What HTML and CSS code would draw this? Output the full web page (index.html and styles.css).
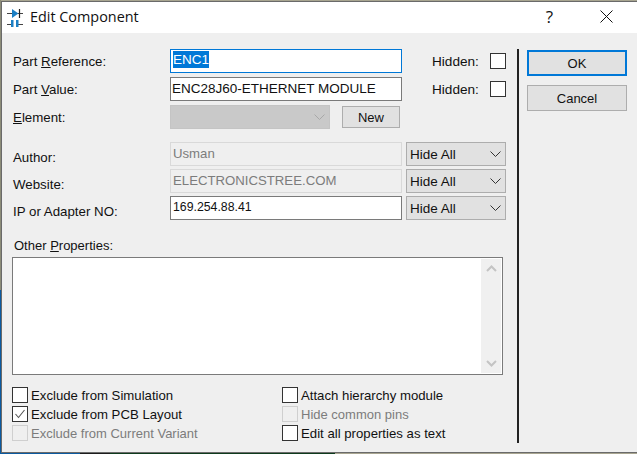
FILE: index.html
```html
<!DOCTYPE html>
<html lang="en">
  <head>
    <meta charset="UTF-8" />
    <title>Edit Component</title>
    <link rel="stylesheet" href="styles.css">
  </head>
  <body>
    <div class="dialog">
      <div class="titlebar">
        <svg class="app_icon" width="16" height="20" viewBox="0 0 16 20">
          <path d="M0 5.5H16M0 16.5H5M11 16.5H16" stroke="#444" fill="none" />
          <path d="M5 1L11.5 5.5L5 10Z" fill="#1c7fc4" />
          <path d="M12.5 1V10" stroke="#222" stroke-width="1.2" />
          <path d="M4 12H6.5V19H4ZM9 12H11.5V19H9Z" fill="#1c7fc4" />
        </svg>
        <span class="title_text">Edit Component</span>
        <span class="help_btn">?</span>
        <svg class="close_btn" width="13" height="13" viewBox="0 0 13 13">
          <path d="M.5 .5L12.5 12.5M12.5 .5L.5 12.5" stroke="#111" fill="none" />
        </svg>
      </div>
      <div class="content">
        <div class="main">
          <div class="row row_top">
            <label class="label"><span>Part <u>R</u>eference:</span></label>
            <div class="field"><span class="selected">ENC1</span></div>
            <span class="hidden_label">Hidden:</span>
            <span class="check hidden_check"></span>
          </div>
          <div class="row row_top">
            <label class="label"><span>Part <u>V</u>alue:</span></label>
            <div class="field field_dark field_value">ENC28J60-ETHERNET MODULE</div>
            <span class="hidden_label">Hidden:</span>
            <span class="check hidden_check"></span>
          </div>
          <div class="row row_top">
            <label class="label"><span><u>E</u>lement:</span></label>
            <div class="element_select">
              <svg width="11" height="6" viewBox="0 0 11 6"><path d="M.5 .5L5.5 5.5L10.5 .5" stroke="#a8a8a8" fill="none" /></svg>
            </div>
            <button class="new_btn">New</button>
          </div>

          <div class="meta">
            <div class="row">
              <label class="label label_low"><span>Author:</span></label>
              <div class="field field_off">Usman</div>
              <div class="hide_select">Hide All
                <svg width="11" height="6" viewBox="0 0 11 6"><path d="M.5 .5L5.5 5.5L10.5 .5" stroke="#333" fill="none" /></svg>
              </div>
            </div>
            <div class="row">
              <label class="label label_low"><span>Website:</span></label>
              <div class="field field_off">ELECTRONICSTREE.COM</div>
              <div class="hide_select">Hide All
                <svg width="11" height="6" viewBox="0 0 11 6"><path d="M.5 .5L5.5 5.5L10.5 .5" stroke="#333" fill="none" /></svg>
              </div>
            </div>
            <div class="row">
              <label class="label label_low"><span>IP or Adapter NO:</span></label>
              <div class="field field_dark field_ip">169.254.88.41</div>
              <div class="hide_select">Hide All
                <svg width="11" height="6" viewBox="0 0 11 6"><path d="M.5 .5L5.5 5.5L10.5 .5" stroke="#333" fill="none" /></svg>
              </div>
            </div>
          </div>

          <div class="other_label">Other <u>P</u>roperties:</div>
          <div class="other_box">
            <div class="scrollbar">
              <svg width="11" height="7" viewBox="0 0 11 7"><path d="M1 6L5.5 1.5L10 6" stroke="#c4c4c4" stroke-width="2" fill="none" /></svg>
              <svg width="11" height="7" viewBox="0 0 11 7"><path d="M1 1L5.5 5.5L10 1" stroke="#c4c4c4" stroke-width="2" fill="none" /></svg>
            </div>
          </div>

          <div class="options">
            <div class="option"><span class="check"></span>Exclude from Simulation</div>
            <div class="option"><span class="check"></span>Attach hierarchy module</div>
            <div class="option">
              <span class="check">
                <svg width="14" height="14" viewBox="0 0 14 14"><path d="M2.5 7L5.5 10.5L11.5 3" stroke="#555" stroke-width="1.1" fill="none" /></svg>
              </span>Exclude from PCB Layout
            </div>
            <div class="option option_off"><span class="check"></span>Hide common pins</div>
            <div class="option option_off"><span class="check"></span>Exclude from Current Variant</div>
            <div class="option"><span class="check"></span>Edit all properties as text</div>
          </div>
        </div>
        <div class="separator"></div>
        <div class="side">
          <button class="side_btn side_btn_ok">OK</button>
          <button class="side_btn">Cancel</button>
        </div>
      </div>
    </div>
  </body>
</html>
```

FILE: styles.css
```css
html,
body {
  margin: 0;
  padding: 0;
}
body {
  width: 637px;
  height: 454px;
  overflow: hidden;
  box-sizing: border-box;
  padding: 1px 0 1px 1px;
  /* bits of the app window behind the dialog */
  background:
    linear-gradient(90deg, #0b5aa0 0 80px, #1c1c1c 80px 110px, #0d3a1c 110px 335px, #a8a590 335px) left bottom / 100% 1px no-repeat,
    linear-gradient(#8c8c78 0 290px, #0b5aa0 290px) left top / 1px 100% no-repeat,
    #a8a590;
  font-family: "Liberation Sans", Arial, sans-serif;
  font-size: 13px;
  color: #111;
}
.dialog {
  height: 452px;
  box-sizing: border-box;
  display: flex;
  flex-direction: column;
  background-color: #efefef;
  border: 1px solid #6a6a6a;
  border-right: 0;
}
.titlebar {
  height: 31px;
  flex: none;
  display: flex;
  align-items: center;
  background-color: #fff;
  padding-left: 5px;
}
.app_icon {
  flex: none;
}
.title_text {
  margin-left: 7px;
  margin-bottom: 2px;
  font-family: "Open Sans", sans-serif;
  font-size: 14.4px;
}
.help_btn {
  margin-left: auto;
  margin-bottom: 2px;
  font-family: "Open Sans", sans-serif;
  font-size: 17px;
}
.close_btn {
  margin: 0 24px 2px 47px;
}
.content {
  flex: 1;
  display: flex;
  padding-top: 16px;
}
.main {
  width: 491px;
  margin-left: 10px;
  flex: none;
}
.row {
  display: flex;
  height: 24px;
}
.row_top {
  margin-bottom: 4px;
}
.label {
  width: 158px;
  flex: none;
  padding-left: 1px;
  padding-top: 5px;
  box-sizing: border-box;
  font-size: 13.3px;
}
.label_low {
  padding-top: 8px;
}
.field {
  width: 232px;
  height: 24px;
  flex: none;
  box-sizing: border-box;
  border: 1px solid #0078d7;
  background-color: #fff;
  padding: 0 2px;
  line-height: 21px;
  font-size: 13.5px;
}
.field_dark {
  border-color: #7a7a7a;
}
.field_value {
  padding-left: 1px;
}
.field_ip {
  font-size: 12.3px;
}
.field_off {
  border: 1px solid #d9d9d9;
  background-color: #efefef;
  color: #7c7c7c;
  font-size: 13.2px;
}
.selected {
  display: inline-block;
  height: 17px;
  line-height: 17px;
  margin-top: 1px;
  vertical-align: top;
  background-color: #0078d7;
  color: #fff;
}
.hidden_label {
  width: 47px;
  flex: none;
  margin-left: 30px;
  padding-top: 5px;
  font-size: 13.6px;
}
.hidden_check {
  margin: 4px 0 0 11px;
}
.check {
  width: 16px;
  height: 16px;
  flex: none;
  box-sizing: border-box;
  border: 1px solid #333;
  background-color: #fff;
  display: flex;
  align-items: center;
  justify-content: center;
}
.element_select {
  width: 160px;
  height: 24px;
  flex: none;
  box-sizing: border-box;
  background-color: #c9c9c9;
  border: 1px solid #c4c4c4;
  display: flex;
  align-items: center;
  justify-content: flex-end;
  padding-right: 4px;
}
.new_btn {
  width: 58px;
  height: 22px;
  flex: none;
  margin: 1px 0 0 12px;
  padding: 0;
  box-sizing: border-box;
  border: 1px solid #adadad;
  background-color: #e1e1e1;
  font: inherit;
  color: inherit;
}
.meta {
  margin-top: 13px;
  display: flex;
  flex-direction: column;
  gap: 3px;
}
.hide_select {
  width: 100px;
  height: 24px;
  flex: none;
  margin-left: 4px;
  box-sizing: border-box;
  border: 1px solid #adadad;
  background-color: #e1e1e1;
  display: flex;
  align-items: center;
  justify-content: space-between;
  padding: 0 4px 0 3px;
  font-size: 13.5px;
}
.other_label {
  margin: 18px 0 3px 2px;
  height: 16px;
  line-height: 16px;
}
.other_box {
  height: 118px;
  box-sizing: border-box;
  border: 1px solid #7a7a7a;
  background-color: #fff;
  display: flex;
  justify-content: flex-end;
  padding: 1px;
}
.scrollbar {
  width: 20px;
  background-color: #f0f0f0;
  display: flex;
  flex-direction: column;
  align-items: center;
  justify-content: space-between;
  padding: 6px 0;
  box-sizing: border-box;
}
.options {
  margin-top: 12px;
  display: grid;
  grid-template-columns: 270px 1fr;
  grid-auto-rows: 16px;
  row-gap: 3px;
}
.option {
  display: flex;
  align-items: center;
  gap: 3px;
  font-size: 13.2px;
}
.option_off {
  color: #7c7c7c;
  font-size: 13px;
}
.option_off .check {
  border-color: #cfcfcf;
  background-color: #efefef;
}
.separator {
  width: 2px;
  height: 394px;
  margin-left: 14px;
  flex: none;
  background-color: #222;
}
.side {
  margin-left: 8px;
  padding-top: 1px;
  display: flex;
  flex-direction: column;
  gap: 9px;
}
.side_btn {
  width: 100px;
  height: 26px;
  padding: 0;
  box-sizing: border-box;
  border: 1px solid #adadad;
  background-color: #e1e1e1;
  font: inherit;
  color: inherit;
}
.side_btn_ok {
  border: 2px solid #0078d7;
}
```
